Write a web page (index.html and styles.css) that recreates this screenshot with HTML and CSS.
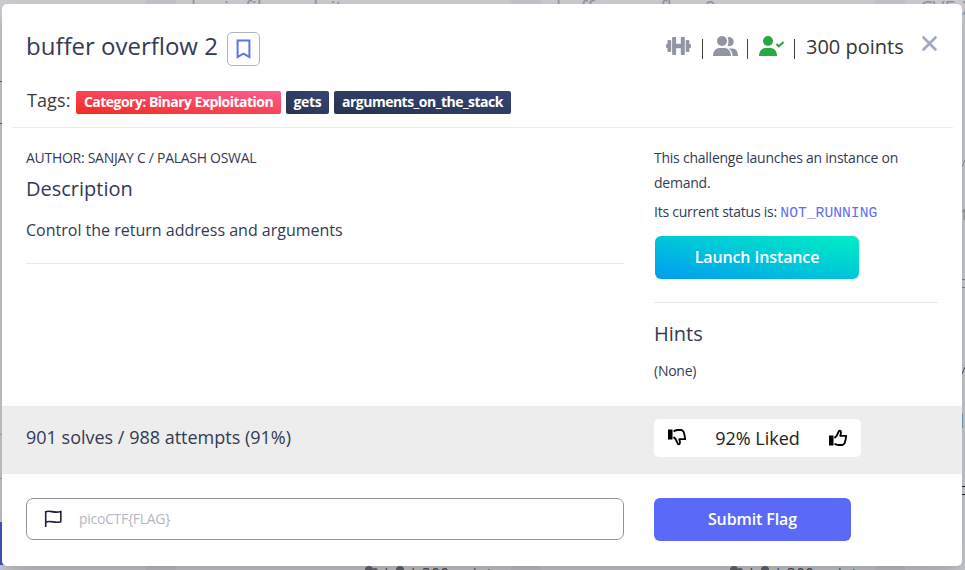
FILE: index.html
```html
<!DOCTYPE html>
<html lang="en">
<head>
<meta charset="utf-8">
<title>buffer overflow 2</title>
<link rel="stylesheet" href="styles.css">
</head>
<body>
<div class="board">
  <div class="card"><div class="tab"></div><div class="tab-lower"></div><div class="card-blue"></div></div>
  <div class="card"><div class="card-title">basic-file-exploit</div><div class="card-points"><svg width="14" height="12" viewBox="0 0 14 12"><circle cx="5" cy="4" r="4"/><circle cx="11" cy="5" r="3"/></svg>|<svg width="10" height="12" viewBox="0 0 10 12"><circle cx="5" cy="4" r="4"/></svg>| 300 points</div></div>
  <div class="card"><div class="card-title">buffer overflow 0</div><div class="card-points"><svg width="14" height="12" viewBox="0 0 14 12"><circle cx="5" cy="4" r="4"/><circle cx="11" cy="5" r="3"/></svg>|<svg width="10" height="12" viewBox="0 0 10 12"><circle cx="5" cy="4" r="4"/></svg>| 300 points</div></div>
  <div class="card"><div class="card-title">CVE-X</div></div>
</div>
<svg class="edge" width="3" height="570" viewBox="0 0 3 570"><path stroke="#8c8c98" d="M0 167l3-7M0 211h3M2 209v11M0 279.500h3M0 287.500h3"/><path stroke="#55556a" d="M0 374l3-7"/><path stroke="#66a9cc" d="M.5 413v15"/><path stroke="#15151c" d="M0 486.500h3M0 494.500h3"/></svg>
<main class="modal">
  <header class="head">
    <div class="title-row">
      <h1 class="title">buffer overflow 2</h1>
      <button class="bookmark" aria-label="Bookmark"><svg width="15" height="20" viewBox="0 0 15 20"><path d="M1.6 1.6H13.4V18L7.5 14.7 1.6 18Z"/></svg></button>
      <div class="meta">
        <svg class="gray" width="26" height="20" viewBox="0 0 26 20"><rect x="0" y="8" width="3" height="4" rx="1"/><rect x="1.500" y="4" width="3.700" height="12" rx="1"/><rect x="6.100" y="1" width="4" height="18" rx="1"/><rect x="9" y="7.800" width="7" height="4.400"/><rect x="14.800" y="1" width="4" height="18" rx="1"/><rect x="19.700" y="4" width="3.700" height="12" rx="1"/><rect x="22" y="8" width="3" height="4" rx="1"/></svg>
        <i class="bar bar-one"></i>
        <svg class="gray people first" width="26" height="20" viewBox="0 0 26 20"><circle cx="9" cy="5" r="5"/><path d="M0 20c0-5 3-8 6.500-8h5c3.500 0 6.500 3 6.500 8zM14.500 1.500a4.500 4.500 0 1 1 0 8.300c1.300-2.500 1.300-5.800 0-8.300zM15.500 12.500h4c3.500 0 5.500 3 5.500 7.500h-5.500c0-3.500-1.500-6-4-7.500z"/></svg>
        <i class="bar"></i>
        <svg class="green people" width="26" height="20" viewBox="0 0 26 20"><circle cx="9" cy="5" r="5"/><path d="M0 20c0-5 3-8 6.500-8h5c3.500 0 6.500 3 6.500 8z"/><path class="tick" d="M17.500 8l2.300 2.300L24.500 6"/></svg>
        <i class="bar bar-last"></i>
        <span class="points">300 points</span>
      </div>
      <svg class="close" width="17" height="17" viewBox="0 0 17 17"><path d="M2.500 2.500l12 12M14.500 2.500l-12 12"/></svg>
    </div>
    <div class="tags"><span class="tags-label">Tags:</span><span class="tag red">Category: Binary Exploitation</span><span class="tag t2">gets</span><span class="tag t3">arguments_on_the_stack</span></div>
  </header>
  <section class="body">
    <div class="left">
      <p class="author">AUTHOR: SANJAY C / PALASH OSWAL</p>
      <h2 class="desc-title">Description</h2>
      <p class="desc">Control the return address and arguments</p>
    </div>
    <div class="right">
      <p class="small">This challenge launches an instance on demand.</p>
      <p class="small status">Its current status is: <code>NOT_RUNNING</code></p>
      <button class="launch">Launch Instance</button>
      <h2 class="hints">Hints</h2>
      <p class="small none">(None)</p>
    </div>
  </section>
  <section class="stats">
    <span class="solves">901 solves / 988 attempts (91%)</span>
    <div class="liked">
      <svg class="thumb" width="20" height="18" viewBox="0 0 20 18"><g transform="matrix(1 0 0 -1 0 17)"><path class="solid" d="M1 6.500h4.500v10H1z"/><path d="M6.500 9l2-2L10.500 3C11 1 13 1.500 13 3.500c0 1.300-.7 2.300-.7 3.300H18.200L17.500 11l-1 3.500-2 1.500H10.500c-2 0-2.500-1-4-1.200"/></g></svg>
      <span>92% Liked</span>
      <svg class="thumb" width="20" height="18" viewBox="0 0 20 18"><path class="solid" d="M1 6.500h4.500v10H1z"/><path d="M6.500 9l2-2L10.500 3C11 1 13 1.500 13 3.500c0 1.300-.7 2.300-.7 3.300H18.200L17.500 11l-1 3.500-2 1.500H10.500c-2 0-2.500-1-4-1.200"/></svg>
    </div>
  </section>
  <section class="submit">
    <div class="field"><svg width="19" height="17" viewBox="0 0 19 17"><path d="M1.700 17V1.700C6-.2 10 3.700 16.800 1.500V11.700C11 13.700 7 10 1.700 12"/></svg><span>picoCTF{FLAG}</span></div>
    <button class="send">Submit Flag</button>
  </section>
</main>
</body>
</html>
```
FILE: styles.css
```css
* { box-sizing: border-box; }
body { margin: 0; width: 965px; height: 570px; overflow: hidden; background: #c6c6d0; font-family: "Open Sans", sans-serif; color: #343a54; }
h1, h2, p { margin: 0; font-weight: 400; }
button { font-family: inherit; padding: 0; border: 0; }
svg { display: block; flex: none; }
.board { display: grid; grid-template-columns: 146px 335px 334px 335px; gap: 30px; height: 570px; overflow: hidden; }
.card { background: #cecfd3; height: 570px; display: flex; flex-direction: column; justify-content: space-between; overflow: hidden; }
.card-title { font-size: 20px; line-height: 24px; height: 24px; margin: -4px 0 0 15px; color: #9696a4; white-space: nowrap; }
.card-points { display: flex; align-items: flex-start; gap: 4px; margin: 0 0 -15px 188px; height: 20px; font-size: 16px; line-height: 19px; color: #45454f; fill: #62626f; white-space: nowrap; }
.card-points svg { margin-top: 1px; }
.tab { height: 43px; margin-top: 81px; border: solid #62626d; border-width: 1px 0; }
.tab-lower { height: 45px; margin-top: 310px; border: solid #aaaab3; border-width: 1px 0; }
.card-blue { height: 43px; margin: 43px 0 5px; background: #4654c4; }
.edge { position: absolute; left: 962px; top: 0; fill: none; }
.modal { position: absolute; left: 2px; top: 4px; width: 960px; height: 562px; background: #fff; border-radius: 5px; box-shadow: 0 10px 24px rgba(40, 40, 50, .28); display: flex; flex-direction: column; overflow: hidden; }
.head { height: 124px; margin: 0 9px 0 10px; border-bottom: 1px solid #e9ecef; padding: 28px 0 0 14px; }
.title-row { display: flex; height: 34px; }
.title { font-size: 24px; line-height: 28px; width: 201px; white-space: nowrap; }
.bookmark { width: 33px; height: 34px; background: #fff; border: 1px solid #adb5bd; border-radius: 5px; display: grid; place-items: center; }
.bookmark path { fill: none; stroke: #5e72f4; stroke-width: 2; }
.meta { display: flex; margin-left: 406px; width: 244px; height: 30px; align-items: flex-start; padding-top: 4px; }
.gray { fill: #9094a3; }
.green { fill: #28a745; }
.people { margin-left: 11px; }
.first { margin-left: 10px; }
.tick { fill: none; stroke: #28a745; stroke-width: 2; }
.bar { width: 1px; height: 20px; margin: 3px 0 0 8px; background: #414141; }
.bar-one { margin-left: 10px; }
.bar-last { margin-left: 9px; }
.points { font-size: 20px; line-height: 22px; margin-left: 11px; color: #363636; white-space: nowrap; }
.close { margin: 3px 0 0 11px; fill: none; stroke: #a0a8c4; stroke-width: 2.600; stroke-linecap: round; }
.tags { display: flex; height: 30px; margin-top: 20px; align-items: center; }
.tags-label { font-size: 18px; width: 50px; color: #3a3a3a; padding: 0 0 2px 1px; letter-spacing: .1px; }
.tag { height: 23px; margin-top: 2px; border-radius: 2px; font-size: 14px; line-height: 22px; font-weight: 700; color: #fff; text-align: center; letter-spacing: -.52px; white-space: nowrap; background: linear-gradient(to top right, #28344e, #354576); }
.red { width: 205px; background: linear-gradient(to top right, #f22c1e, #ff5c92); }
.t2 { width: 43px; margin-left: 5px; letter-spacing: -.3px; }
.t3 { width: 177px; margin-left: 5px; }
.body { height: 278px; display: flex; padding: 17px 24px 0; }
.left { width: 598px; height: 119px; border-bottom: 1px solid #e6e8ea; }
.author { font-size: 14px; line-height: 25px; letter-spacing: -.28px; }
.desc-title { font-size: 20px; line-height: 30px; margin-top: 4px; }
.desc { font-size: 16px; line-height: 28px; margin-top: 12px; }
.right { width: 284px; margin-left: 30px; }
.small { font-size: 14px; line-height: 25px; letter-spacing: -.24px; }
.status { margin-top: 4px; height: 25px; white-space: nowrap; }
code { font-family: "Liberation Mono", monospace; font-size: 14.7px; letter-spacing: 0; color: #6070f4; }
.launch { display: block; width: 204px; height: 43px; margin: 12px 0 0 1px; border-radius: 6px; background: linear-gradient(to top right, #009cf0, #00f0c4); color: #fff; font-size: 16px; line-height: 40px; padding-bottom: 1px; font-weight: 600; letter-spacing: -.12px; }
.hints { margin-top: 23px; padding-top: 16px; border-top: 1px solid #e6e8ea; font-size: 20px; line-height: 30px; }
.none { margin-top: 9px; }
.stats { height: 68px; background: #ededed; display: flex; padding: 13px 24px 0; }
.solves { width: 628px; font-size: 18px; line-height: 37px; }
.liked { width: 207px; height: 38px; background: #fff; border-radius: 5px; display: flex; align-items: center; justify-content: space-between; padding: 0 13px; font-size: 18px; color: #222; }
.thumb { fill: none; stroke: #000; stroke-width: 1.8; stroke-linejoin: round; }
.solid { fill: #000; stroke: none; }
.submit { display: flex; padding: 24px 24px 0; }
.field { width: 598px; height: 42px; border: 1px solid #92929f; border-radius: 7px; display: flex; align-items: center; padding-left: 17px; font-size: 14px; color: #b4b8c2; }
.field svg { fill: none; stroke: #1d2238; stroke-width: 1.6; margin-bottom: 1px; }
.field span { margin: 0 0 2px 16px; letter-spacing: -.3px; }
.send { width: 197px; height: 43px; margin-left: 30px; border-radius: 6px; background: #5a69f6; color: #fff; font-size: 16px; line-height: 40px; padding-bottom: 2px; font-weight: 600; letter-spacing: -.1px; }
```
